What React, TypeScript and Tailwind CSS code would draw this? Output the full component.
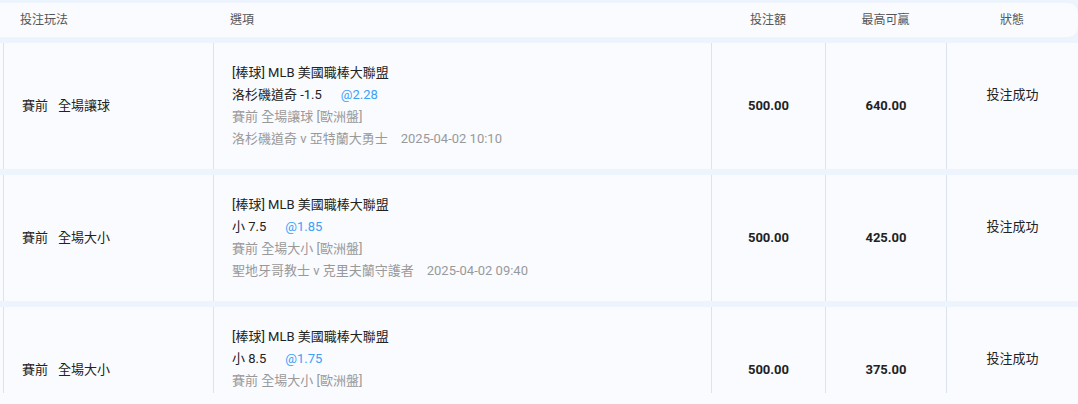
const font = { fontFamily: 'Roboto, "Noto Sans CJK TC", "Noto Sans", sans-serif' };

type Bet = {
  market: string;
  pick: string;
  odds: string;
  detail: string;
  match: string;
  time: string;
  stake: string;
  win: string;
};

const bets: Bet[] = [
  {
    market: "全場讓球",
    pick: "洛杉磯道奇 -1.5",
    odds: "@2.28",
    detail: "賽前 全場讓球 [歐洲盤]",
    match: "洛杉磯道奇 v 亞特蘭大勇士",
    time: "2025-04-02 10:10",
    stake: "500.00",
    win: "640.00",
  },
  {
    market: "全場大小",
    pick: "小 7.5",
    odds: "@1.85",
    detail: "賽前 全場大小 [歐洲盤]",
    match: "聖地牙哥教士 v 克里夫蘭守護者",
    time: "2025-04-02 09:40",
    stake: "500.00",
    win: "425.00",
  },
  {
    market: "全場大小",
    pick: "小 8.5",
    odds: "@1.75",
    detail: "賽前 全場大小 [歐洲盤]",
    match: "聖地牙哥教士 v 克里夫蘭守護者",
    time: "2025-04-02 09:10",
    stake: "500.00",
    win: "375.00",
  },
];

const cols = "grid grid-cols-[213px_498px_114px_121px_1fr]";

export default function App() {
  return (
    <div className="w-[1078px] h-[404px] bg-[#f9fbff] overflow-hidden" style={font}>
      <div className="h-[393px] overflow-hidden bg-[#eef4fd] pt-[3px]">
        {/* Header */}
        <div className={`${cols} h-[34px] items-center bg-[#f9fbff] rounded-r-[10px] text-[12px] text-[#555]`}>
          <div className="pl-5">投注玩法</div>
          <div className="pl-[17px]">選項</div>
          <div className="text-center">投注額</div>
          <div className="text-center">最高可贏</div>
          <div className="text-center">狀態</div>
        </div>

        {/* Rows */}
        <div className="mt-[6px] flex flex-col gap-[6px]">
          {bets.map((b, i) => (
            <div key={i} className={`${cols} h-[126px] shrink-0 bg-[#f9fbff] text-[13px] text-[#222]`}>
              <div className="ml-[3px] border-l border-[#dde3ee] flex items-center pl-[18px] whitespace-nowrap">
                <span>賽前</span>
                <span className="ml-[10px]">{b.market}</span>
              </div>
              <div className="border-l border-[#dde3ee] flex flex-col justify-center pl-[18px] leading-[22px] whitespace-nowrap">
                <div>[棒球] MLB 美國職棒大聯盟</div>
                <div>
                  {b.pick}
                  <span className="ml-[19px] text-[#3ba1f7]">{b.odds}</span>
                </div>
                <div className="text-[#999]">{b.detail}</div>
                <div className="text-[#999]">
                  {b.match}
                  <span className="ml-[13px]">{b.time}</span>
                </div>
              </div>
              <div className="border-l border-[#dde3ee] flex items-center justify-center font-bold">
                {b.stake}
              </div>
              <div className="border-l border-[#dde3ee] flex items-center justify-center font-bold">
                {b.win}
              </div>
              <div className="border-l border-[#dde3ee] flex flex-col items-center justify-center leading-[22px]">
                <div>投注成功</div>
                <div className="h-[22px]" />
              </div>
            </div>
          ))}
        </div>
      </div>
    </div>
  );
}
